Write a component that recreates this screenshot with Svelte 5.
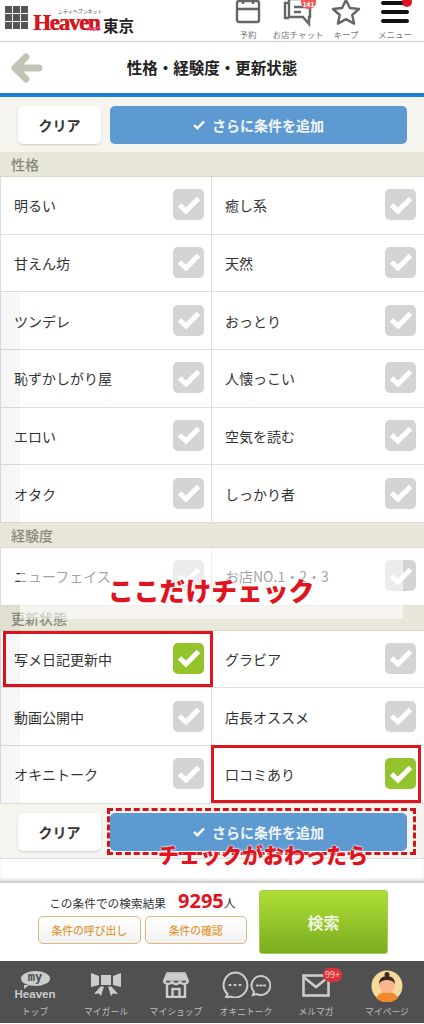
<script>
	const personality = ["明るい", "癒し系", "甘えん坊", "天然", "ツンデレ", "おっとり", "恥ずかしがり屋", "人懐っこい", "エロい", "空気を読む", "オタク", "しっかり者"]
	const experience = ["ニューフェイス", "お店NO.1・2・3"]
	const updates = ["写メ日記更新中", "グラビア", "動画公開中", "店長オススメ", "オキニトーク", "口コミあり"]
	const checked = ["写メ日記更新中", "口コミあり"]

	const sections = [
		{ title: "性格", items: personality },
		{ title: "経験度", items: experience },
		{ title: "更新状態", items: updates },
	]
</script>

<div class="page">
	<header class="top">
		<div class="brand">
			<div class="grid-icon">
				{#each Array(9) as _}<i></i>{/each}
			</div>
			<div class="logo">
				<span class="logo-small">シティヘブンネット</span>
				<span class="logo-main">Heaven</span>
				<span class="logo-net">net</span>
			</div>
			<span class="city">東京</span>
		</div>
		<nav class="top-nav">
			<div class="top-item">
				<svg width="28" height="30" viewBox="0 0 28 30" fill="none" stroke="#666" stroke-width="2.4">
					<rect x="3" y="3" width="22" height="21" rx="2" />
					<path d="M3 11h22M9 0v6M19 0v6" />
				</svg>
				<span>予約</span>
			</div>
			<div class="top-item">
				<svg width="32" height="30" viewBox="0 0 32 30" fill="none" stroke="#666" stroke-width="2.4">
					<path d="M7 1h21v18h-1v7l-6-7H7z" fill="#fff" />
					<path d="M7 5H3v15h4" />
					<path d="M12 9h11M12 14h7" />
				</svg>
				<b class="chat-badge">141</b>
				<span>お店チャット</span>
			</div>
			<div class="top-item">
				<svg width="30" height="30" viewBox="0 0 30 30" fill="none" stroke="#666" stroke-width="2.4" stroke-linejoin="round">
					<path d="M15 2l3.900 8 9.100 1-6.800 6 1.900 8.600-8.100-4.500-8.100 4.500 1.900-8.600-6.800-6 9.100-1z" />
				</svg>
				<span>キープ</span>
			</div>
			<div class="top-item">
				<svg width="30" height="30" viewBox="0 0 30 30" fill="#111">
					<rect x="1" y="3" width="28" height="4" rx="2" />
					<rect x="1" y="12" width="28" height="4" rx="2" />
					<rect x="1" y="21" width="28" height="4" rx="2" />
				</svg>
				<b class="menu-dot"></b>
				<span>メニュー</span>
			</div>
		</nav>
	</header>

	<div class="title-bar">
		<svg class="back" width="34" height="32" viewBox="0 0 34 32" fill="none" stroke="#c4c4b6" stroke-width="7" stroke-linecap="round" stroke-linejoin="round">
			<path d="M16 5L5 16l11 11M5 16h24" />
		</svg>
		<h1>性格・経験度・更新状態</h1>
	</div>

	<div class="toolbar">
		<button class="clear">クリア</button>
		<button class="add">
			<svg width="12" height="10" viewBox="0 0 12 10" fill="none" stroke="#fff" stroke-width="2.400"><path d="M1 5l3.400 3.200L11 1.500" /></svg>
			さらに条件を追加
		</button>
	</div>

	{#each sections as section}
		<h2>{section.title}</h2>
		<div class="options">
			{#each section.items as item}
				<div class="option" class:picked={checked.includes(item)}>
					<span>{item}</span>
					<div class="box" class:on={checked.includes(item)}>
						<svg width="24" height="20" viewBox="0 0 24 20" fill="none" stroke="#fff" stroke-width="5"><path d="M2.500 10l6.500 6L21.500 3.500" /></svg>
					</div>
				</div>
			{/each}
		</div>
	{/each}

	<div class="toolbar bottom">
		<button class="clear">クリア</button>
		<button class="add">
			<svg width="12" height="10" viewBox="0 0 12 10" fill="none" stroke="#fff" stroke-width="2.400"><path d="M1 5l3.400 3.200L11 1.500" /></svg>
			さらに条件を追加
		</button>
	</div>

	<div class="spacer"></div>

	<div class="search">
		<div class="result">
			<p>この条件での検索結果<strong>9295</strong><small>人</small></p>
			<div class="result-btns">
				<button>条件の呼び出し</button>
				<button>条件の確認</button>
			</div>
		</div>
		<button class="go">検索</button>
	</div>

	<nav class="tabs">
		<div class="tab">
			<div class="tab-icon my">
				<b>my</b>
				<em>Heaven</em>
			</div>
			<span>トップ</span>
		</div>
		<div class="tab">
			<svg class="tab-icon bow" width="30" height="24" viewBox="0 0 30 24" fill="#ccc">
				<path d="M0 1l8 3v9l-8 2zM30 1l-8 3v9l8 2zM10 3h10v10H10zM9.500 14.500L3 22l5-.5 2 2.500 3-9.500zM20.500 14.500L27 22l-5-.5-2 2.500-3-9.500z" />
			</svg>
			<span>マイガール</span>
		</div>
		<div class="tab">
			<svg class="tab-icon shop" width="26" height="26" viewBox="0 0 26 26" fill="none" stroke="#ccc" stroke-width="2.400">
				<path d="M4 1h18l3 7H1z" fill="#ccc" stroke-width="1.500" />
				<path d="M1 8c0 5 7 5 8 1 1 4 7 4 8 0 1 4 8 4 8-1" />
				<path d="M4 13v12h18V13M9.500 25v-8h7v8" />
			</svg>
			<span>マイショップ</span>
		</div>
		<div class="tab">
			<svg class="tab-icon talk" width="50" height="27" viewBox="0 0 50 27" fill="none" stroke="#ccc" stroke-width="2">
				<path d="M14 1.500a12.500 12.500 0 1 1-5 24l-4 1 1.500-3.500A12.500 12.500 0 0 1 14 1.500z" />
				<path d="M39.500 5a9.500 9.500 0 1 1-4 18l-3.500 1 1-3.200A9.500 9.500 0 0 1 39.500 5z" />
				<path d="M8.500 14h1M13.500 14h1M18.500 14h1M36 14.500h1M39.500 14.500h1M43 14.500h1" stroke-width="2.200" stroke-linecap="round" />
			</svg>
			<span>オキニトーク</span>
		</div>
		<div class="tab">
			<svg class="tab-icon mail" width="28" height="23" viewBox="0 0 28 23" fill="none" stroke="#ccc" stroke-width="2.600">
				<rect x="1.500" y="1.500" width="25" height="20" />
				<path d="M1.500 3l12.500 10L26.500 3" />
			</svg>
			<b class="mail-badge">99+</b>
			<span>メルマガ</span>
		</div>
		<div class="tab">
			<svg class="tab-icon face" width="32" height="32" viewBox="0 0 32 32">
				<circle cx="16" cy="16" r="15.500" fill="#f6dc9c" />
				<path d="M5 28c2-4 6-6 11-6s9 2 11 6a15.500 15.500 0 0 1-22 0z" fill="#f08a2c" />
				<circle cx="16" cy="15" r="8" fill="#fbb48e" />
				<path d="M8 14c0-6 4-8 8-8s8 2 8 8c-2-3-4-4-8-4s-6 1-8 4z" fill="#3a2a20" />
				<circle cx="16" cy="4.500" r="2.500" fill="#3a2a20" />
			</svg>
			<span>マイページ</span>
		</div>
	</nav>

	<div class="strip upper"></div>
	<div class="strip lower"></div>
	<div class="ghost"></div>
	<div class="mark here">ここだけチェック</div>
	<div class="dashed"></div>
	<div class="mark done">チェックがおわったら</div>
</div>

<style>
	:global(body) {
		margin: 0;
		background: #fff;
	}

	.page {
		position: relative;
		width: 424px;
		height: 1024px;
		overflow: hidden;
		font-family: "Noto Sans CJK JP", "Noto Sans", sans-serif;
		color: #333;
	}

	button {
		font-family: inherit;
		padding: 0;
		cursor: pointer;
	}

	.top {
		height: 41px;
		display: flex;
		justify-content: space-between;
		border-bottom: 1px solid #ccc;
	}

	.brand {
		display: flex;
		align-items: flex-start;
		padding: 6px 0 0 5px;
	}

	.grid-icon {
		display: grid;
		grid-template-columns: repeat(3, 7px);
		grid-auto-rows: 7px;
		gap: 1px;
		margin-right: 5px;
	}

	.grid-icon i {
		background: #555;
	}

	.logo {
		position: relative;
		width: 70px;
		height: 30px;
		color: #d8141c;
	}

	.logo-small {
		position: absolute;
		left: 25px;
		top: 2px;
		font-size: 5px;
		line-height: 6px;
		color: #444;
		white-space: nowrap;
	}

	.logo-main {
		position: absolute;
		left: 0;
		top: 8px;
		font: bold 23px/18px "Liberation Serif", serif;
		letter-spacing: -1.300px;
		text-shadow: 0.5px 0 0 #d8141c;
	}

	.logo-net {
		position: absolute;
		right: 4px;
		top: 19px;
		font: italic bold 8px/8px "Liberation Sans", sans-serif;
		color: #e04a8c;
	}

	.city {
		font-size: 15.500px;
		font-weight: 700;
		line-height: 20px;
		margin-top: 9px;
		color: #222;
	}

	.top-nav {
		display: flex;
	}

	.top-item {
		position: relative;
		display: flex;
		flex-direction: column;
		align-items: center;
		justify-content: flex-end;
		height: 41px;
	}

	.top-item:nth-child(1) {
		width: 44px;
	}

	.top-item:nth-child(2) {
		width: 56px;
	}

	.top-item:nth-child(3) {
		width: 40px;
	}

	.top-item:nth-child(4) {
		width: 58px;
	}

	.top-item svg {
		position: absolute;
		top: -2px;
	}

	.top-item span {
		font-size: 8.500px;
		line-height: 13px;
		color: #777;
		white-space: nowrap;
	}

	.chat-badge {
		position: absolute;
		top: 0;
		left: 31px;
		width: 15px;
		height: 9px;
		border-radius: 0 0 7px 7px;
		background: #ef5a5a;
		color: #fff;
		font-size: 6.500px;
		line-height: 9px;
		text-align: center;
	}

	.menu-dot {
		position: absolute;
		top: -3px;
		left: 36px;
		width: 10px;
		height: 10px;
		border-radius: 50%;
		background: #e0141e;
	}

	.title-bar {
		position: relative;
		height: 51px;
		display: flex;
		align-items: center;
		justify-content: center;
		border-bottom: 4px solid #1c7fd8;
	}

	.back {
		position: absolute;
		left: 10px;
		top: 10px;
	}

	h1 {
		margin: 0 0 2px;
		font-size: 15.500px;
		font-weight: 700;
		color: #222;
	}

	.toolbar {
		height: 55px;
		box-sizing: border-box;
		padding: 9px 17px 0 18px;
		display: flex;
		gap: 9px;
		background: #f6f4ef;
	}

	.toolbar.bottom {
		border-bottom: 1px solid #ddd;
	}

	.clear {
		width: 83px;
		height: 38px;
		border: none;
		border-radius: 5px;
		background: #fff;
		box-shadow: 0 1px 2px #ccc;
		font-size: 14px;
		font-weight: 700;
		color: #333;
	}

	.add {
		flex: 1;
		height: 38px;
		border: none;
		border-radius: 5px;
		background: #5e9ad2;
		color: #f2f6fa;
		font-size: 14px;
		font-weight: 700;
		display: flex;
		align-items: center;
		justify-content: center;
		gap: 7px;
	}

	h2 {
		margin: 0;
		height: 25px;
		box-sizing: border-box;
		padding-left: 11px;
		background: #e8e7d9;
		border-bottom: 1px solid #d8d8ca;
		font-size: 14px;
		font-weight: 500;
		line-height: 25px;
		color: #8a8a7a;
	}

	.options {
		display: grid;
		grid-template-columns: 212px 212px;
		grid-auto-rows: 57.670px;
	}

	.option {
		position: relative;
		display: flex;
		align-items: center;
		justify-content: space-between;
		box-sizing: border-box;
		padding: 0 8px 0 13px;
		border-bottom: 1px solid #ddd;
		font-size: 14px;
		color: #333;
	}

	.option:nth-child(odd) {
		padding-right: 7px;
		border-right: 1px solid #ddd;
		border-left: 1px solid #ddd;
	}

	.option.picked::after {
		content: "";
		position: absolute;
		border: 3px solid #e0141e;
		pointer-events: none;
	}

	.option.picked:nth-child(odd)::after {
		left: 2px;
		right: -2px;
		top: 0;
		bottom: 0;
	}

	.option.picked:nth-child(even)::after {
		left: -1px;
		right: 3px;
		top: -1px;
		bottom: 0;
	}

	.box {
		width: 31px;
		height: 31px;
		border-radius: 5px;
		background: #d4d4d4;
		display: flex;
		align-items: center;
		justify-content: center;
		margin-top: -1px;
	}

	.box.on {
		background: #94c42c;
	}

	.spacer {
		height: 24px;
		box-shadow: inset 0 -4px 4px -2px #bbb;
	}

	.search {
		height: 78px;
		display: flex;
		gap: 12px;
		padding-left: 38px;
		padding-top: 7px;
		box-sizing: border-box;
		background: #fff;
	}

	.result {
		width: 209px;
	}

	.result p {
		margin: 0;
		height: 26px;
		font-size: 11.700px;
		line-height: 22px;
		color: #333;
		text-align: center;
		white-space: nowrap;
	}

	.result strong {
		font: bold 20px/22px "Noto Sans", sans-serif;
		color: #e0141e;
		margin-left: 12px;
	}

	.result small {
		font-size: 12px;
	}

	.result-btns {
		display: flex;
		gap: 4px;
	}

	.result-btns button {
		flex: 1 1 0;
		height: 28px;
		border: 1px solid #dcb67c;
		border-radius: 5px;
		background: linear-gradient(#fff, #f1f1f1);
		color: #e09a3a;
		font-size: 10.800px;
		font-weight: 500;
	}

	.go {
		width: 129px;
		height: 64px;
		border: 1px solid #a8cc58;
		border-radius: 3px;
		background: linear-gradient(#aedf36, #7aac20);
		color: #eef4dc;
		font-size: 16px;
		font-weight: 700;
	}

	.tabs {
		height: 62px;
		display: grid;
		grid-template-columns: 70px 72px 68px 72px 68px 74px;
		background: #505050;
	}

	.tab {
		position: relative;
		display: flex;
		flex-direction: column;
		align-items: center;
		justify-content: flex-end;
		padding-bottom: 4px;
		box-sizing: border-box;
	}

	.tab span {
		font-size: 8.800px;
		line-height: 14px;
		color: #bdbdbd;
		white-space: nowrap;
	}

	.tab-icon {
		position: absolute;
		top: 11px;
	}

	.talk {
		top: 10px;
	}

	.mail {
		top: 13px;
	}

	.face {
		top: 9px;
	}

	.my {
		top: 10px;
		width: 44px;
		text-align: center;
	}

	.my b {
		position: relative;
		display: block;
		width: 29px;
		height: 15px;
		margin: 0 auto;
		border-radius: 50%;
		background: #ccc;
		color: #505050;
		font: bold 12px/13px "DejaVu Sans Mono", monospace;
	}

	.my b::after {
		content: "";
		position: absolute;
		left: 3px;
		bottom: -3px;
		border-left: 5px solid #ccc;
		border-bottom: 4px solid transparent;
	}

	.my em {
		display: block;
		margin-top: 3px;
		font: normal bold 11.500px/10px "Liberation Sans", sans-serif;
		color: #ccc;
	}

	.mail-badge {
		position: absolute;
		top: 7px;
		left: 41px;
		width: 19px;
		height: 14px;
		border-radius: 7px;
		background: #e0303c;
		color: #f4d0d0;
		font-size: 9px;
		font-weight: 400;
		line-height: 14px;
		text-align: center;
	}

	.strip {
		position: absolute;
		left: 0;
		width: 20px;
		background: rgba(0, 0, 0, 0.03);
		pointer-events: none;
	}

	.upper {
		top: 293px;
		height: 230px;
	}

	.lower {
		top: 605px;
		height: 198px;
	}

	.ghost {
		position: absolute;
		left: 20px;
		top: 548px;
		width: 383px;
		height: 71px;
		background: rgba(255, 255, 255, 0.55);
	}

	.mark {
		position: absolute;
		color: #e0141e;
		font-weight: 900;
		white-space: nowrap;
		text-shadow: 0 0 2px #fff, 0 0 2px #fff;
	}

	.here {
		left: 108px;
		top: 575px;
		font-size: 25.800px;
		line-height: 30px;
	}

	.dashed {
		position: absolute;
		left: 107px;
		top: 808px;
		width: 309px;
		height: 47px;
		box-sizing: border-box;
		border: 3px dashed #d0141c;
	}

	.done {
		left: 158px;
		top: 841px;
		font-size: 21px;
		line-height: 26px;
	}
</style>
